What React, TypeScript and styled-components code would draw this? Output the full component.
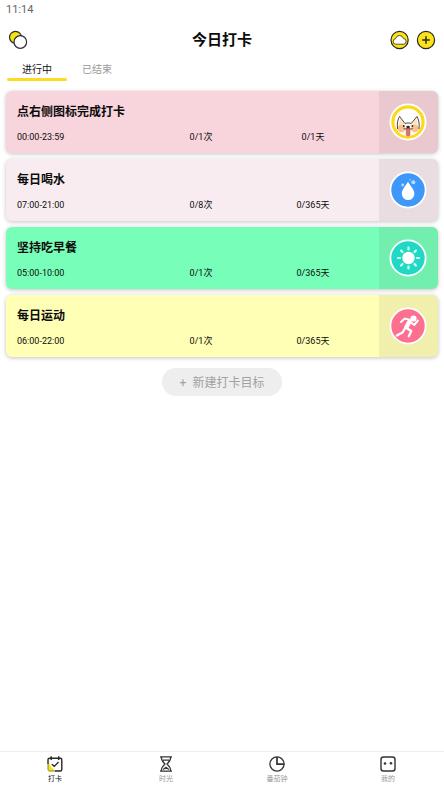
import React from "react";
import styled, { createGlobalStyle } from "styled-components";

const GlobalStyle = createGlobalStyle`
  * { box-sizing: border-box; }
  body {
    margin: 0;
    background: #fff;
    color: #0c0c0c;
    font-family: Roboto, "Noto Sans CJK SC", sans-serif;
  }
  button { font: inherit; color: inherit; border: 0; padding: 0; background: none; cursor: pointer; }
  svg { display: block; }
`;

const Screen = styled.div`
  display: flex;
  flex-direction: column;
  min-height: 100vh;
`;

const StatusBar = styled.div`
  padding: 2px 6px 0;
  font-size: 11px;
  line-height: 16px;
  color: #666;
`;

const Header = styled.header`
  display: grid;
  grid-template-columns: 1fr auto 1fr;
  align-items: center;
  height: 44px;
  padding: 0 8px;
`;

const Title = styled.h1`
  margin: 0;
  font-size: 15px;
  line-height: 20px;
  font-weight: 700;
`;

const Actions = styled.div`
  display: flex;
  justify-content: flex-end;
  gap: 6px;
`;

const IconButton = styled.button`
  width: 20px;
  height: 20px;
`;

const Tabs = styled.div`
  display: flex;
  padding: 0 7px;
`;

const Tab = styled.button<{ $active?: boolean }>`
  display: flex;
  flex-direction: column;
  align-items: center;
  width: 60px;
  height: 19px;
  font-size: 10px;
  line-height: 16px;
  color: ${(p) => (p.$active ? "#111" : "#999")};
  &::after {
    content: "";
    width: 100%;
    height: 3px;
    border-radius: 2px;
    background: ${(p) => (p.$active ? "#fbdc24" : "transparent")};
  }
`;

const Main = styled.main`
  flex: 1;
  display: flex;
  flex-direction: column;
  align-items: center;
  padding: 10px 6px;
`;

const List = styled.ul`
  display: flex;
  flex-direction: column;
  gap: 6px;
  width: 100%;
  margin: 0;
  padding: 0;
  list-style: none;
`;

const Card = styled.li<{ $color: string }>`
  display: flex;
  min-height: 62px;
  border-radius: 6px;
  overflow: hidden;
  background: ${(p) => p.$color};
  box-shadow: 0 1px 4px rgba(0, 0, 0, 0.24);
`;

const CardBody = styled.div`
  flex: 1;
  display: flex;
  flex-direction: column;
  gap: 8px;
  padding: 12px 10px 0 11px;
`;

const CardTitle = styled.h2`
  margin: 0;
  font-size: 12px;
  line-height: 18px;
  font-weight: 700;
`;

const Stats = styled.div`
  display: grid;
  grid-template-columns: 8fr 7fr 7fr;
  font-size: 9px;
  line-height: 16px;
  text-align: center;
`;

const Period = styled.span`
  text-align: left;
`;

const CheckIn = styled.button`
  display: flex;
  align-items: center;
  justify-content: center;
  width: 59px;
  padding-right: 2px;
  background: rgba(70, 50, 60, 0.08);
`;

const AddGoal = styled.button`
  display: flex;
  align-items: center;
  justify-content: center;
  gap: 6px;
  width: 120px;
  height: 28px;
  padding-top: 1px;
  margin-top: 11px;
  border-radius: 14px;
  background: #eee;
  color: #a2a2a2;
  font-size: 12px;
  line-height: 18px;
`;

const Nav = styled.nav`
  display: flex;
  height: 38px;
  border-top: 1px solid #eee;
`;

const NavItem = styled.button<{ $active?: boolean }>`
  flex: 1;
  display: flex;
  flex-direction: column;
  align-items: center;
  padding: 3px 1px 0 0;
  font-size: 7px;
  line-height: 12px;
  color: ${(p) => (p.$active ? "#111" : "#999")};
`;

const Circles = () => (
  <svg width="20" height="20" viewBox="0 0 20 20" stroke="#2b2b3a" strokeWidth="1.2">
    <circle cx="7.5" cy="7.3" r="6" fill="#f5e30c" />
    <circle cx="12.3" cy="12" r="6.3" fill="#fff" />
  </svg>
);

const Cloud = () => (
  <svg width="20" height="20" viewBox="0 0 20 20" stroke="#2c2a16" strokeWidth="1.2">
    <circle cx="9.6" cy="10" r="8.6" fill="#fbe31b" />
    <path d="M5.4 14.2A2.8 2.8 0 0 1 5.6 8.7 4 4 0 0 1 13.400 8.500 2.900 2.900 0 0 1 14 14.200Z" fill="#fff" strokeWidth=".8" />
  </svg>
);

const Plus = () => (
  <svg width="20" height="20" viewBox="0 0 20 20" stroke="#2c2a16" strokeWidth="1.2">
    <circle cx="10" cy="10" r="8.6" fill="#fbe31b" />
    <path d="M10 6.2v7.6M6.2 10h7.6" strokeWidth="1.5" />
  </svg>
);

const Badge = ({ color, children }: { color: string; children: React.ReactNode }) => (
  <svg width="38" height="38" viewBox="0 0 38 38">
    <circle cx="19" cy="19" r="17.6" fill={color} stroke="#fff" strokeWidth="1.8" />
    {children}
  </svg>
);

const Dog = () => (
  <Badge color="#fbd91d">
    <circle cx="19" cy="19" r="13.5" fill="#fff" />
    <path d="M8.800 28C7.500 22 8.500 17 10.500 13.500L16.500 20H21.500L28 13.500C30 17 30.800 22 29.400 28 27 31.500 23 32.800 19 32.800S11 31.500 8.800 28Z" fill="#fffaf3" />
    <path d="M11.200 15.500C10 20 9.700 22 10.200 25L15.500 20.500ZM27.300 15.500C28.500 20 28.700 22 28.200 25L23 20.500Z" fill="#fbe3c3" />
    <circle cx="12.500" cy="25.500" r="3.800" fill="#fbc090" />
    <circle cx="25.800" cy="25.500" r="3.800" fill="#fbc090" />
    <path d="M8.600 26C7.800 20 8.700 16.500 10.600 13.500L16 20.500C18 19.800 20.200 19.800 22.200 20.500L28 13.500C29.900 17 30.700 21 29.900 26" fill="none" stroke="#3d3329" strokeWidth=".9" />
    <path d="M17.200 25.500H21V31.200A1.900 1.900 0 0 1 17.200 31.200Z" fill="#e56f6c" stroke="#8b4b44" strokeWidth=".4" />
    <path d="M14.500 25.300C16.500 26.600 18.300 26 19.100 24.800 20 26 22 26.600 23.800 25.300" fill="none" stroke="#493428" strokeWidth=".8" />
    <ellipse cx="19.100" cy="23.900" rx="1.800" ry="1.200" fill="#302620" />
    <circle cx="14.700" cy="23" r=".9" fill="#302620" />
    <circle cx="23.400" cy="23" r=".9" fill="#302620" />
  </Badge>
);

const Water = () => (
  <Badge color="#3e98fa">
    <path d="M19 10.500C20.500 14.500 25.400 17.500 25.400 22.800A6.300 6.300 0 0 1 12.800 22.800C12.800 17.500 17.500 14.500 19 10.500Z" fill="#fff" />
    <circle cx="24.300" cy="11.300" r="2" fill="#b9dcff" />
    <circle cx="13.700" cy="14" r="1.400" fill="#b9dcff" />
    <circle cx="21" cy="8.800" r=".7" fill="#b9dcff" />
  </Badge>
);

const Sun = () => (
  <Badge color="#20d9c5">
    <circle cx="19.500" cy="19" r="6.200" fill="#fff" />
    <g stroke="#d8fff3" strokeWidth="2.2" strokeLinecap="round">
      {[0, 45, 90, 135, 180, 225, 270, 315].map((angle) => (
        <path key={angle} d="M19.500 8.500v2" transform={`rotate(${angle} 19.500 19)`} />
      ))}
    </g>
  </Badge>
);

const Runner = () => (
  <Badge color="#fd708f">
    <circle cx="24.500" cy="11.500" r="3.100" fill="#fff" />
    <g fill="none" stroke="#fff" strokeLinecap="round" strokeLinejoin="round">
      <path d="M20.500 14.500L17.500 20" strokeWidth="4.400" />
      <path d="M20.500 12.800L15.800 11.600 12 15M22 15.500L25.200 18 28.900 13.500" strokeWidth="2" />
      <path d="M16.500 20.500L13.500 25.500 7.800 28.500M17.500 21L22.300 24 19.800 29.200" strokeWidth="2.300" />
    </g>
  </Badge>
);

const CalendarIcon = () => (
  <svg width="18" height="18" viewBox="0 0 18 18" fill="none" stroke="#292929" strokeWidth="1.4">
    <path d="M2 7.500C4 9 5 13 9.500 16H3.500Q2 16 2 14.500Z" fill="#f5e41c" stroke="none" />
    <path d="M2 9V4.700Q2 3.200 3.500 3.200H14.300Q15.800 3.200 15.800 4.700V14.500Q15.800 16 14.300 16H9" />
    <path d="M2 9V14.500Q2 16 3.500 16H9" stroke="#8d841c" strokeWidth="1" />
    <path d="M5.200 1.300v3.600M12.700 1.300v3.600M5.800 9.200l2.500 2.200 4.200-4.300" />
  </svg>
);

const HourglassIcon = () => (
  <svg width="18" height="18" viewBox="0 0 18 18" fill="none" stroke="#333" strokeWidth="1.2">
    <path d="M3 1.800h12M3 16.200h12M4.300 2C4.300 6 6 7.300 8 9 6 10.700 4.300 12 4.300 16M13.700 2C13.700 6 12 7.300 10 9 12 10.700 13.700 12 13.700 16M6 5.200h6M6.200 14.500L9 12.200l2.800 2.300" />
  </svg>
);

const TimerIcon = () => (
  <svg width="18" height="18" viewBox="0 0 18 18" fill="none" stroke="#333" strokeWidth="1.3">
    <circle cx="9" cy="9" r="7.100" />
    <path d="M9 1.900V9.200H16.300" strokeWidth="1.700" />
  </svg>
);

const ProfileIcon = () => (
  <svg width="18" height="18" viewBox="0 0 18 18" fill="none" stroke="#333" strokeWidth="1.4">
    <rect x="2" y="2" width="14" height="14" rx="2.500" />
    <circle cx="6" cy="8.500" r="1.300" fill="#333" stroke="none" />
    <circle cx="12" cy="8.200" r="1.300" fill="#333" stroke="none" />
  </svg>
);

const goals = [
  { name: "点右侧图标完成打卡", period: "00:00-23:59", times: "0/1次", days: "0/1天", color: "#f8d5dc", icon: <Dog /> },
  { name: "每日喝水", period: "07:00-21:00", times: "0/8次", days: "0/365天", color: "#f8ecf0", icon: <Water /> },
  { name: "坚持吃早餐", period: "05:00-10:00", times: "0/1次", days: "0/365天", color: "#77ffb9", icon: <Sun /> },
  { name: "每日运动", period: "06:00-22:00", times: "0/1次", days: "0/365天", color: "#ffffb5", icon: <Runner /> },
];

const sections = [
  { label: "打卡", icon: <CalendarIcon /> },
  { label: "时光", icon: <HourglassIcon /> },
  { label: "番茄钟", icon: <TimerIcon /> },
  { label: "我的", icon: <ProfileIcon /> },
];

export default function App() {
  return (
    <Screen>
      <GlobalStyle />
      <StatusBar>11:14</StatusBar>
      <Header>
        <IconButton aria-label="主题"><Circles /></IconButton>
        <Title>今日打卡</Title>
        <Actions>
          <IconButton aria-label="云同步"><Cloud /></IconButton>
          <IconButton aria-label="添加"><Plus /></IconButton>
        </Actions>
      </Header>
      <Tabs role="tablist">
        <Tab role="tab" aria-selected="true" $active>进行中</Tab>
        <Tab role="tab" aria-selected="false">已结束</Tab>
      </Tabs>
      <Main>
        <List>
          {goals.map((goal) => (
            <Card key={goal.name} $color={goal.color}>
              <CardBody>
                <CardTitle>{goal.name}</CardTitle>
                <Stats>
                  <Period>{goal.period}</Period>
                  <span>{goal.times}</span>
                  <span>{goal.days}</span>
                </Stats>
              </CardBody>
              <CheckIn aria-label={`完成${goal.name}`}>{goal.icon}</CheckIn>
            </Card>
          ))}
        </List>
        <AddGoal><span>+</span><span>新建打卡目标</span></AddGoal>
      </Main>
      <Nav>
        {sections.map((section, index) => (
          <NavItem key={section.label} $active={index === 0}>
            {section.icon}
            <span>{section.label}</span>
          </NavItem>
        ))}
      </Nav>
    </Screen>
  );
}
